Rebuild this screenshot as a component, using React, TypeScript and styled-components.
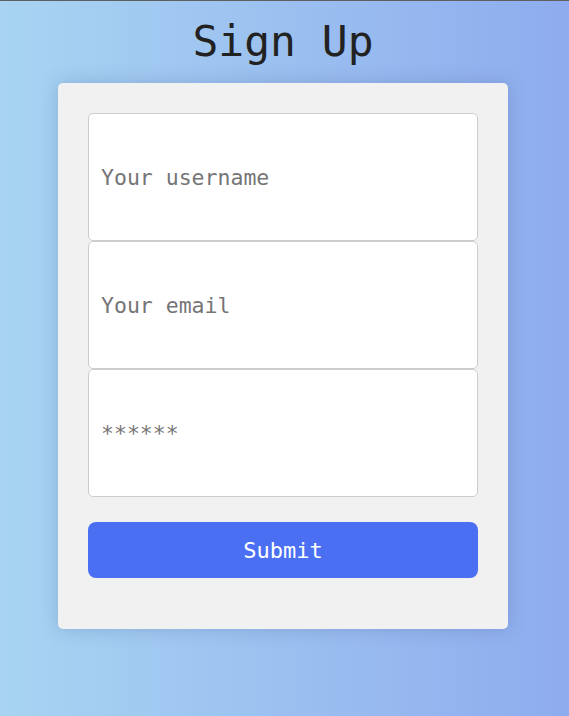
import React from "react";
import styled, { createGlobalStyle } from "styled-components";

const GlobalStyle = createGlobalStyle`
  html, body {
    margin: 0;
    padding: 0;
  }
  body {
    font-family: "DejaVu Sans Mono", "Liberation Mono", monospace;
    border-top: 1px solid #5f5f5f;
  }
  * {
    box-sizing: border-box;
  }
`;

const Page = styled.div`
  min-height: 715px;
  background: linear-gradient(to right, #a8d4f2, #8eacee);
  display: flex;
  flex-direction: column;
  align-items: center;
  padding: 15px 3px 0 0;
`;

const Title = styled.h1`
  margin: 0 0 16px;
  font-size: 43px;
  line-height: 51px;
  font-weight: 400;
  color: #222;
`;

const Card = styled.form`
  width: 450px;
  background-color: #f1f1f1;
  border-radius: 5px;
  padding: 30px 30px 51px;
  box-shadow: 0 0 18px rgba(60, 80, 140, 0.25);
  display: flex;
  flex-direction: column;
`;

const Field = styled.input`
  width: 100%;
  height: 128px;
  border: 1px solid #cdcdcd;
  border-radius: 5px;
  background: #fff;
  padding: 0 12px;
  font-family: inherit;
  font-size: 21.5px;
  color: #333;
  outline: none;

  &::placeholder {
    color: #757575;
  }
`;

const Submit = styled.button`
  margin-top: 25px;
  height: 56px;
  border: none;
  border-radius: 8px;
  background-color: #4a6ff3;
  color: #fff;
  font-family: inherit;
  font-size: 22px;
  cursor: pointer;
`;

export default function App() {
  return (
    <>
      <GlobalStyle />
      <Page>
        <Title>Sign Up</Title>
        <Card onSubmit={(e) => e.preventDefault()}>
          <Field type="text" placeholder="Your username" />
          <Field type="email" placeholder="Your email" />
          <Field type="password" placeholder="******" />
          <Submit type="submit">Submit</Submit>
        </Card>
      </Page>
    </>
  );
}
